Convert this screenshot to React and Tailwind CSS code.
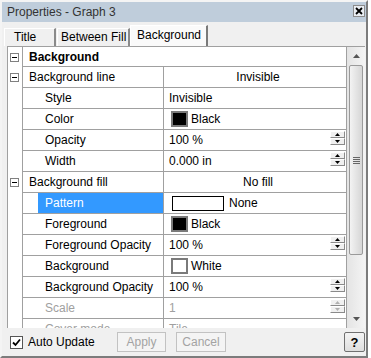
import React from "react";

const LC = "border-[#a0a0a0]";

function Minus() {
  return (
    <div className="ml-[2px] w-[9px] h-[9px] border border-[#808080] bg-white flex items-center justify-center">
      <div className="w-[5px] h-[1px] bg-black" />
    </div>
  );
}

function Arrow({ up, color, w = 5, h = 3 }) {
  return (
    <svg width={w} height={h} className="block">
      <polygon points={up ? `${w / 2},0 ${w},${h} 0,${h}` : `0,0 ${w},0 ${w / 2},${h}`} fill={color} />
    </svg>
  );
}

function Spin({ disabled }) {
  const c = disabled ? "#b0b0b0" : "#000";
  const btn =
    "w-[15px] h-[7px] bg-[#f0f0f0] border-t border-l border-t-white border-l-white border-r border-b border-r-[#8a8a8a] border-b-[#8a8a8a] flex items-center justify-center";
  return (
    <div className="ml-auto mr-[1px] self-start mt-[1px] flex flex-col">
      <div className={btn}>
        <Arrow up color={c} />
      </div>
      <div className={btn}>
        <Arrow color={c} />
      </div>
    </div>
  );
}

function Row({ minus, label, sub, selected, disabled, children, valueCenter }) {
  const tc = disabled ? "text-[#a0a0a0]" : "text-black";
  return (
    <div className="flex h-[21px] shrink-0">
      <div className="w-[14px] flex items-center">{minus && <Minus />}</div>
      <div className={`flex-1 flex border-l border-b ${LC}`}>
        <div className="w-[140px] flex">
          {sub && <div className="w-[15px] shrink-0" />}
          <div
            className={`flex-1 flex items-center whitespace-nowrap ${
              sub ? "pl-[7px]" : "pl-[6px]"
            } ${selected ? "bg-[#3399ff] text-white" : tc}`}
          >
            {label}
          </div>
        </div>
        <div
          className={`flex-1 flex items-center border-l ${LC} ${tc} whitespace-nowrap ${
            valueCenter ? "justify-center pl-[6px]" : "pl-[5px]"
          }`}
        >
          {children}
        </div>
      </div>
    </div>
  );
}

function Swatch({ white }) {
  return (
    <div
      className={`ml-[2px] mr-[3px] w-[17px] h-[16px] border-2 border-[#7a7a7a] ${
        white ? "bg-white" : "bg-black"
      }`}
    />
  );
}

export default function App() {
  return (
    <div className="w-[371px] h-[358px] bg-white font-['Liberation_Sans',Arial,sans-serif] text-[12px] leading-none">
      <div className="w-[368px] h-[358px] bg-[#f0f0f0] border-t-2 border-l-2 border-t-[#f4f4f4] border-l-[#f4f4f4] border-r-2 border-b-2 border-r-[#7c7c7c] border-b-[#7c7c7c] flex flex-col">
        {/* title bar */}
        <div className="h-[20px] shrink-0 bg-[#bfcddb] flex items-center pl-[5px]">
          <span className="text-[#333] text-[12px]">Properties - Graph 3</span>
          <div className="ml-auto mr-[1px] mb-[2px] w-[12px] h-[12px] border border-[#8c8c8c] bg-[#e9edf2] flex items-center justify-center">
            <svg width="8" height="8" className="block">
              <path d="M1 1 L7 7 M7 1 L1 7" stroke="#000" strokeWidth="1.8" />
            </svg>
          </div>
        </div>

        {/* tabs */}
        <div className="h-[24px] shrink-0 flex items-end">
          <div className="ml-[2px] w-[52px] h-[18px] bg-[#f0f0f0] border-t border-l border-white border-r-2 border-r-[#8a8a8a] flex items-center pl-[9px] pb-[1px]">
            Title
          </div>
          <div className="ml-[1px] w-[73px] h-[18px] bg-[#f0f0f0] border-t border-l border-white border-r-2 border-r-[#8a8a8a] flex items-center pl-[3px] pb-[1px] whitespace-nowrap overflow-hidden">
            Between Fill
          </div>
          <div className="w-[78px] h-[21px] bg-[#fafafa] border-t border-l border-white border-r-2 border-r-[#7a7a7a] flex items-center pl-[6px] pb-[3px]">
            Background
          </div>
        </div>

        {/* grid */}
        <div className="h-[282px] shrink-0 flex pl-[5px]">
          <div className={`flex border-t border-l ${LC} h-full bg-white overflow-hidden`}>
            <div className="w-[338px] flex flex-col overflow-hidden">
              <div className="flex h-[20px] shrink-0">
                <div className="w-[14px] flex items-center">
                  <Minus />
                </div>
                <div className={`flex-1 flex items-center border-l border-b ${LC} pl-[6px] font-bold text-black`}>
                  Background
                </div>
              </div>
              <Row minus label="Background line" valueCenter>
                Invisible
              </Row>
              <Row sub label="Style">Invisible</Row>
              <Row sub label="Color">
                <Swatch />
                Black
              </Row>
              <Row sub label="Opacity">
                100 %
                <Spin />
              </Row>
              <Row sub label="Width">
                0.000 in
                <Spin />
              </Row>
              <Row minus label="Background fill" valueCenter>
                No fill
              </Row>
              <Row sub selected label="Pattern">
                <div className="ml-[3px] mr-[5px] w-[52px] h-[15px] border border-black bg-white" />
                None
              </Row>
              <Row sub label="Foreground">
                <Swatch />
                Black
              </Row>
              <Row sub label="Foreground Opacity">
                100 %
                <Spin />
              </Row>
              <Row sub label="Background">
                <Swatch white />
                White
              </Row>
              <Row sub label="Background Opacity">
                100 %
                <Spin />
              </Row>
              <Row sub disabled label="Scale">
                1
                <Spin disabled />
              </Row>
              <Row sub disabled label="Cover mode">
                Tile
              </Row>
            </div>
            {/* scrollbar */}
            <div className={`w-[19px] h-full border-l ${LC} bg-gradient-to-r from-[#e4e4e4] to-[#f4f4f4] flex flex-col items-center`}>
              <div className="h-[18px] flex items-center justify-center">
                <Arrow up color="#555" w={7} h={4} />
              </div>
              <div className="w-[14px] h-[190px] rounded-[2px] border border-[#9a9a9a] bg-gradient-to-r from-[#f3f3f3] to-[#d6d6d6] flex flex-col items-center justify-center gap-[1px]">
                <div className="w-[7px] h-[1px] bg-[#666]" />
                <div className="w-[7px] h-[1px] bg-[#666]" />
                <div className="w-[7px] h-[1px] bg-[#666]" />
                <div className="w-[7px] h-[1px] bg-[#666]" />
              </div>
              <div className="flex-1" />
              <div className="h-[18px] flex items-center justify-center">
                <Arrow color="#555" w={7} h={4} />
              </div>
            </div>
          </div>
        </div>

        {/* bottom bar */}
        <div className="flex-1 flex items-center">
          <div className="ml-[8px] w-[107px] flex items-center">
            <div className="w-[13px] h-[13px] border border-[#555] bg-white flex items-center justify-center">
              <svg width="9" height="9" className="block">
                <path d="M1 4.5 L3.5 7 L8 1.5" stroke="#000" strokeWidth="1.8" fill="none" />
              </svg>
            </div>
            <span className="ml-[5px] text-black">Auto Update</span>
          </div>
          <div className="w-[49px] h-[20px] border border-[#c2c2c2] bg-[#f4f4f4] flex items-center justify-center text-[#a3a3a3]">
            Apply
          </div>
          <div className="ml-[10px] w-[50px] h-[20px] border border-[#c2c2c2] bg-[#f4f4f4] flex items-center justify-center text-[#a3a3a3]">
            Cancel
          </div>
          <div className="ml-auto mr-[1px] w-[21px] h-[20px] border border-[#707070] rounded-[2px] bg-gradient-to-b from-[#f4f4f4] to-[#dedede] flex items-center justify-center font-bold text-black text-[13px]">
            ?
          </div>
        </div>
      </div>
    </div>
  );
}
